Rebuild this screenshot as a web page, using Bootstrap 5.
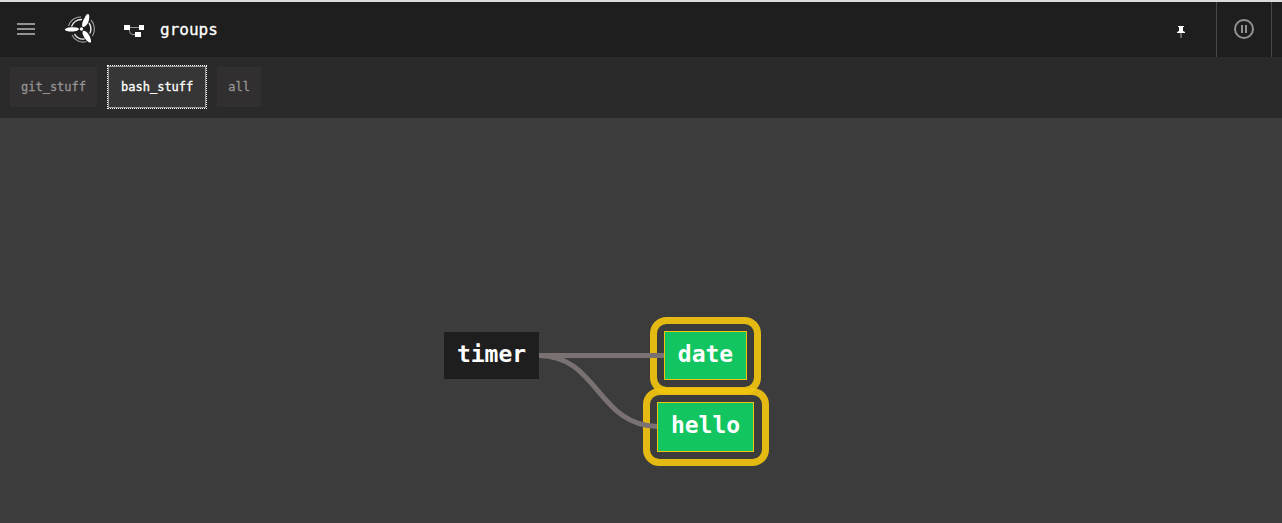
<!DOCTYPE html>
<html lang="en">
<head>
<meta charset="utf-8">
<meta name="viewport" content="width=device-width, initial-scale=1">
<title>groups</title>
<link href="https://cdn.jsdelivr.net/npm/bootstrap@5.3.0/dist/css/bootstrap.min.css" rel="stylesheet">
<style>
body{font-family:"DejaVu Sans Mono",monospace;background:#3c3c3c;color:#fff}
.topbar{height:57px;background:#1e1e1e;border-top:2px solid #dadcdc}
.icon-btn{border:0;border-radius:0;line-height:0;color:#929292}
.page-name{font-size:16px;line-height:20px;-webkit-text-stroke:.3px}
.pause-cell{border-left:1px solid #464646;border-right:1px solid #464646;width:56px;margin-right:10px}
.tabbar{height:61px;background:#2a2a2a;padding:0 10px 2px;gap:11px}
.tab-btn{height:40px;padding:0 11px;border:0;border-radius:0;background:#312f2f;color:#969494;font-size:12px;line-height:16px;-webkit-text-stroke:.3px}
.tab-btn.active{height:42px;padding:0 12px;background:#363636!important;color:#fff!important;border:1px solid #999;outline:1px dotted #fff}
.graph-canvas{background:#3c3c3c}
.edges{left:0;top:0}
.graph-node{display:flex;align-items:center;justify-content:center;font-size:23px;font-weight:700;line-height:24px;padding-bottom:4px}
.source{left:444px;top:214px;width:95px;height:47px;background:#1e1e1e}
.changed{background:#13c560;border:1px solid #f1c40f}
.n-date{left:664px;top:213px;width:83px;height:49px}
.n-hello{left:657px;top:284px;width:97px;height:50px}
</style>
</head>
<body class="d-flex flex-column min-vh-100">
<header class="topbar d-flex align-items-stretch">
  <button type="button" class="btn icon-btn p-0 pb-1 ms-3 me-4" aria-label="Menu">
    <svg width="20" height="20" viewBox="0 0 20 20"><path d="M1 6h18M1 11h18M1 16h18" stroke="currentColor" stroke-width="2"/></svg>
  </button>
  <a href="#" class="d-flex align-items-center pb-1" aria-label="Home">
    <svg class="ms-1" width="32" height="32" viewBox="0 0 32 32">
      <path d="M1 17.500C1 16 5 15 9 15.200C12 15.300 15 16 15 17C15 18 12 19.600 8 19.600C4 19.600 1 19 1 17.500Z" fill="#fff"/>
      <path d="M24 2C26 2 25.500 8 24 11C22 14 20 15.500 18.500 14.700C17.500 13.500 18.500 9 20.500 6C22 3.500 22.500 2 24 2Z" fill="#fff"/>
      <path d="M19 19C21 18 24 21 25.500 24C27 27 27.500 30 26.500 30.500C24.500 31 21 27 20 25C18.500 22 18 20 19 19Z" fill="#fff"/>
      <circle cx="17.500" cy="17" r="1.700" fill="#fff"/>
      <g fill="none">
        <path d="M4.500 14A13 13 0 0 1 17 4.800" stroke="#999" stroke-width="1.200"/>
        <path d="M7.500 14.500A10.500 10.500 0 0 1 18 7.500" stroke="#eee" stroke-width="1.400"/>
        <path d="M27 8A13.500 13.500 0 0 1 28.500 24" stroke="#999" stroke-width="1.200"/>
        <path d="M25 11A10.500 10.500 0 0 1 25.800 21.500" stroke="#eee" stroke-width="1.400"/>
        <path d="M8 23A12 12 0 0 0 22.500 29.500" stroke="#999" stroke-width="1.200"/>
        <path d="M10.500 22A10 10 0 0 0 20.500 27" stroke="#eee" stroke-width="1.400"/>
      </g>
    </svg>
  </a>
  <div class="d-flex align-items-center gap-3 ps-4 ms-1">
    <svg width="20" height="16" viewBox="0 0 20 16"><path d="M4 5.500h12M5.500 5v4q0 3.500 3.500 3.500h3" fill="none" stroke="#999"/><path d="M0 3h6v5H0zM15 3h5v5h-5zM11 10h6v5h-6z" fill="#fff"/></svg>
    <span class="page-name">groups</span>
  </div>
  <button type="button" class="btn icon-btn p-0 ms-auto me-4" aria-label="Pin">
    <svg class="me-1" width="14" height="16" viewBox="0 0 14 16"><path d="M4 4h6v1H9v4l2 1v1H3v-1l2-1V5H4z" fill="#fff"/><path d="M7 11v5" stroke="#666" stroke-width="2"/></svg>
  </button>
  <button type="button" class="btn icon-btn pause-cell p-0 pb-1" aria-label="Pause">
    <svg width="22" height="22" viewBox="0 0 22 22" fill="none" stroke="currentColor" stroke-width="2"><circle cx="11" cy="12" r="9"/><path d="M9 8v8M13 8v8"/></svg>
  </button>
</header>
<nav class="tabbar d-flex align-items-center">
  <button type="button" class="btn tab-btn">git_stuff</button>
  <button type="button" class="btn tab-btn active">bash_stuff</button>
  <button type="button" class="btn tab-btn">all</button>
</nav>
<main class="graph-canvas position-relative flex-grow-1">
  <svg class="edges position-absolute" width="780" height="360" viewBox="0 0 780 360" fill="none">
    <g stroke="#f1c40f" stroke-width="7" stroke-opacity=".93">
      <rect x="653.500" y="202.500" width="104" height="70" rx="13"/>
      <rect x="646.500" y="273.500" width="119" height="71" rx="13"/>
    </g>
    <path d="M539 237.500H665M539 237.500C598 237.500 598 308.500 658 308.500" stroke="#7a7272" stroke-width="5"/>
  </svg>
  <div class="graph-node source position-absolute">timer</div>
  <div class="graph-node changed n-date position-absolute">date</div>
  <div class="graph-node changed n-hello position-absolute">hello</div>
</main>
<script src="https://cdn.jsdelivr.net/npm/bootstrap@5.3.0/dist/js/bootstrap.bundle.min.js"></script>
</body>
</html>
